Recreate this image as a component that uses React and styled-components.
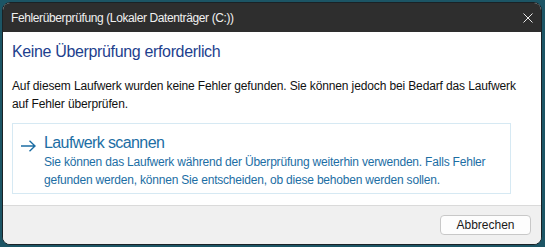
import React from 'react';
import styled, { createGlobalStyle } from 'styled-components';

const Global = createGlobalStyle`
  html, body {
    margin: 0;
    padding: 0;
    background: #1c5565;
  }
  body {
    font-family: "Liberation Sans", Arial, sans-serif;
  }
`;

const Window = styled.div`
  box-sizing: border-box;
  margin: 2px 0 0 2px;
  width: 540px;
  height: 243px;
  border: 1px solid #1a2226;
  border-radius: 8px;
  overflow: hidden;
  display: flex;
  flex-direction: column;
  background: #fff;
`;

const TitleBar = styled.div`
  height: 29px;
  background: #2e2e2e;
  color: #f0f0f0;
  display: flex;
  align-items: center;
  justify-content: space-between;
  padding: 0 0 0 8px;
  font-size: 12px;
  letter-spacing: -0.38px;
  flex-shrink: 0;
`;

const CloseButton = styled.div`
  width: 26px;
  height: 29px;
  display: flex;
  align-items: center;
  justify-content: center;
  color: #e8e8e8;
`;

const Body = styled.div`
  flex: 1;
  padding: 8px 30px 0 9px;
  display: flex;
  flex-direction: column;
`;

const Heading = styled.h1`
  margin: 0;
  font-size: 16px;
  font-weight: 400;
  color: #1e3f8e;
  line-height: 24px;
  letter-spacing: -0.35px;
`;

const Text = styled.p`
  margin: 13px 0 0;
  font-size: 12px;
  line-height: 18px;
  letter-spacing: -0.13px;
  color: #111;
  white-space: nowrap;
`;

const Option = styled.div`
  margin-top: 10px;
  height: 71px;
  box-sizing: border-box;
  border: 1px solid #d6e9f3;
  display: flex;
  gap: 8px;
  padding: 9px 10px 0 7px;
  color: #1c6ea4;
`;

const Arrow = styled.div`
  width: 16px;
  padding-top: 5px;
  flex-shrink: 0;
`;

const OptionText = styled.div`
  display: flex;
  flex-direction: column;
  white-space: nowrap;
`;

const OptionTitle = styled.div`
  font-size: 16px;
  line-height: 20px;
  letter-spacing: -0.6px;
`;

const OptionDesc = styled.div`
  font-size: 12px;
  line-height: 18px;
  letter-spacing: -0.2px;
`;

const Footer = styled.div`
  box-sizing: border-box;
  height: 39px;
  background: #f0f0f0;
  border-top: 1px solid #dadada;
  display: flex;
  align-items: center;
  justify-content: flex-end;
  padding: 0 10px;
  flex-shrink: 0;
`;

const Button = styled.button`
  width: 91px;
  height: 20px;
  border: 1px solid #c8c8c8;
  border-radius: 4px;
  background: #fdfdfd;
  font-family: inherit;
  font-size: 12px;
  color: #1a1a1a;
  padding: 0;
`;

export default function App() {
  return (
    <>
      <Global />
      <Window>
        <TitleBar>
          <span>Fehlerüberprüfung (Lokaler Datenträger (C:))</span>
          <CloseButton>
            <svg width="10" height="10" viewBox="0 0 10 10">
              <path d="M0.5 0.5 L9.5 9.5 M9.5 0.5 L0.5 9.5" stroke="currentColor" strokeWidth="1" />
            </svg>
          </CloseButton>
        </TitleBar>
        <Body>
          <Heading>Keine Überprüfung erforderlich</Heading>
          <Text>
            Auf diesem Laufwerk wurden keine Fehler gefunden. Sie können jedoch bei Bedarf das Laufwerk
            <br />
            auf Fehler überprüfen.
          </Text>
          <Option>
            <Arrow>
              <svg width="16" height="12" viewBox="0 0 16 12">
                <path d="M1 6 H15 M9.5 0.8 L15 6 L9.5 11.2" stroke="currentColor" strokeWidth="1.4" fill="none" />
              </svg>
            </Arrow>
            <OptionText>
              <OptionTitle>Laufwerk scannen</OptionTitle>
              <OptionDesc>
                Sie können das Laufwerk während der Überprüfung weiterhin verwenden. Falls Fehler
                <br />
                gefunden werden, können Sie entscheiden, ob diese behoben werden sollen.
              </OptionDesc>
            </OptionText>
          </Option>
        </Body>
        <Footer>
          <Button>Abbrechen</Button>
        </Footer>
      </Window>
    </>
  );
}
